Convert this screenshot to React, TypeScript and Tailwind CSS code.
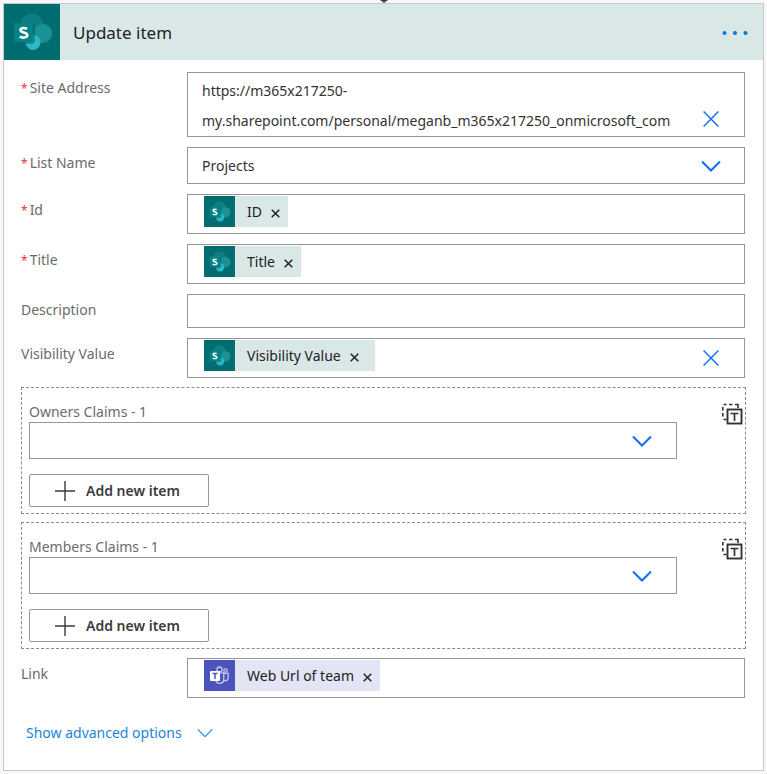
import type { ReactNode } from "react";

function SharePointIcon({ className }: { className: string }) {
  return (
    <svg viewBox="0 0 56 56" className={className} aria-hidden="true">
      <rect width="56" height="56" fill="#036c70" />
      <circle cx="28" cy="21" r="11.500" fill="#0b7f84" />
      <circle cx="38.500" cy="29.500" r="9.500" fill="#1b9197" />
      <circle cx="29" cy="38.500" r="7.500" fill="#2cb8c4" />
      <path d="M12 20h17a2 2 0 0 1 2 2v14.500a4 4 0 0 1-4 3.500H21.600A8 8 0 0 1 21.500 38H12z" fill="#025c60" opacity=".5" />
      <rect x="10" y="19" width="19" height="19" rx="1.500" fill="#048387" />
      <path
        d="M23 24.800c-1-.5-2.200-.8-3.500-.8-1.900 0-3 .8-3 2.100 0 3 6.800 1.800 6.800 5 0 1.600-1.600 2.500-3.900 2.500-1.500 0-2.700-.3-3.700-.9"
        fill="none"
        stroke="#fff"
        strokeWidth="2.600"
      />
    </svg>
  );
}

function TeamsIcon({ className }: { className: string }) {
  return (
    <svg viewBox="0 0 31 31" className={className} aria-hidden="true">
      <rect width="31" height="31" fill="#4b53bc" />
      <g fill="none" stroke="#c5c8ee" strokeWidth="1.300">
        <circle cx="15.500" cy="9.500" r="2.500" />
        <circle cx="21.500" cy="10.500" r="1.700" />
        <path d="M15 12.800h4.800v6.400a4.200 4.200 0 0 1-8.200 1.200" />
        <path d="M19.800 13.300h4.400v4.500a3 3 0 0 1-4.400 2.600" />
      </g>
      <rect x="6" y="11" width="10" height="10" rx="1" fill="#fff" />
      <path d="M8.500 13.500h5M11 13.500v5.500" stroke="#4b53bc" strokeWidth="1.500" />
    </svg>
  );
}

function Chevron({ className }: { className: string }) {
  return (
    <svg viewBox="0 0 20 12" className={className} fill="none" stroke="currentColor" aria-hidden="true">
      <path d="M1 1.500l9 9 9-9" />
    </svg>
  );
}

function Clear({ label }: { label: string }) {
  return (
    <button type="button" aria-label={label} className="mr-[25px] shrink-0 text-[#0f6cf5]">
      <svg viewBox="0 0 16 16" className="size-4" fill="none" stroke="currentColor" strokeWidth="1.400" aria-hidden="true">
        <path d="M.6.6l14.800 14.800M15.400.6L.6 15.400" />
      </svg>
    </button>
  );
}

function ArrayModeIcon() {
  return (
    <svg viewBox="0 0 22 22" className="size-[22px]" fill="none" stroke="#333" aria-hidden="true">
      <path d="M2.500 1.500H5.500M8 1.500h3.500M14 1.500h3V5M1.800 4v3.500M1.800 10v3.500M2.500 16.500h3" strokeWidth="1.600" />
      <rect x="6.500" y="6.500" width="14" height="14" strokeWidth="1.900" fill="#fff" />
      <path d="M9.500 10.500h8M13.500 10.500v7.500" strokeWidth="1.700" />
    </svg>
  );
}

function Row({ id, label, required, children }: { id: string; label: string; required?: boolean; children: ReactNode }) {
  return (
    <div className="flex items-start">
      <label htmlFor={id} className="w-[166px] shrink-0 pt-[6px] leading-5 text-[#6b6b6b]">
        {required && <span className="mr-[2px] text-xs text-[#f0323c]">*</span>}
        {label}
      </label>
      <div className="min-w-0 flex-1">{children}</div>
    </div>
  );
}

function TokenField({ id, token, teams, clearable }: { id: string; token: string; teams?: boolean; clearable?: boolean }) {
  return (
    <div className="flex h-10 items-center border border-[#979797]">
      <span
        className={`mb-1.5 ml-4 flex h-[31px] shrink-0 items-center ${clearable ? "pr-4" : "pr-2"} ${teams ? "bg-[#e3e4f4]" : "bg-[#d9e8e7]"}`}
      >
        {teams ? <TeamsIcon className="size-[31px]" /> : <SharePointIcon className="size-[31px]" />}
        <span className="ml-3 pt-px text-[#222]">{token}</span>
        <button type="button" aria-label={`Remove ${token}`} className="ml-[9px] pt-1 text-[#222]">
          <svg viewBox="0 0 9 9" className="size-[9px]" stroke="currentColor" strokeWidth="1.500" aria-hidden="true">
            <path d="M.7.7l7.600 7.600M8.300.7L.7 8.300" />
          </svg>
        </button>
      </span>
      <input id={id} className="min-w-0 flex-1 self-stretch px-2 outline-none" />
      {clearable && (
        <div className="pt-1">
          <Clear label={`Clear ${token}`} />
        </div>
      )}
    </div>
  );
}

function Claims({ id, label }: { id: string; label: string }) {
  return (
    <div className="flex h-[127px] items-start justify-between border border-dashed border-[#8a8a8a] pl-[7px]">
      <div className="w-[648px] pt-[14px]">
        <label htmlFor={id} className="block leading-5 text-[#6b6b6b]">
          {label}
        </label>
        <div className="grid items-center">
          <select id={id} className="col-start-1 row-start-1 h-[37px] w-full appearance-none border border-[#979797] bg-white px-3">
            <option value=""></option>
          </select>
          <Chevron className="pointer-events-none col-start-1 row-start-1 mr-[25px] h-3 w-5 justify-self-end stroke-2 text-[#0f6cf5]" />
        </div>
        <button
          type="button"
          className="mt-[15px] flex h-[33px] w-[180px] items-center gap-[11px] rounded-[2px] border border-[#979797] pl-[25px] font-semibold text-[#3b3b3b]"
        >
          <svg viewBox="0 0 20 20" className="size-5" stroke="currentColor" strokeWidth="1.400" aria-hidden="true">
            <path d="M10 0v20M0 10h20" />
          </svg>
          Add new item
        </button>
      </div>
      <button type="button" aria-label="Switch to input entire array" className="mt-[15px] mr-[2px]">
        <ArrayModeIcon />
      </button>
    </div>
  );
}

export default function App() {
  return (
    <main className="min-h-screen bg-[#f7f7f7] px-[3px] pb-[3px] font-['Noto_Sans','Open_Sans',sans-serif] text-sm">
      <svg viewBox="0 0 10 3" className="mx-auto block h-[3px] w-[10px]" aria-hidden="true">
        <path d="M1 0h8L5 3z" fill="#444" />
      </svg>
      <section className="border border-[#c8c8c8] bg-white">
        <header className="flex h-14 items-center bg-[#d9e8e7]">
          <SharePointIcon className="size-14" />
          <h1 className="ml-[13px] flex-1 pt-[2px] text-[17px] text-[#222]">Update item</h1>
          <button type="button" aria-label="More options" className="mt-[2px] mr-[15px]">
            <svg viewBox="0 0 26 6" className="h-[6px] w-[26px]" fill="#0078d4" aria-hidden="true">
              <circle cx="2.500" cy="3" r="2" />
              <circle cx="13" cy="3" r="2" />
              <circle cx="23.500" cy="3" r="2" />
            </svg>
          </button>
        </header>

        <form className="pr-[17px] pl-[17px] pt-3">
          <div className="flex flex-col gap-[10px] pr-px">
            <Row id="site" label="Site Address" required>
              <div className="flex h-[65px] items-end border border-[#979797]">
                <textarea
                  id="site"
                  rows={2}
                  className="block h-full min-w-0 flex-1 resize-none overflow-hidden pt-[3px] pl-[14px] leading-[30px] text-[#333] outline-none"
                  defaultValue={"https://m365x217250-\nmy.sharepoint.com/personal/meganb_m365x217250_onmicrosoft_com"}
                />
                <div className="pb-1">
                  <Clear label="Clear site address" />
                </div>
              </div>
            </Row>
            <Row id="list" label="List Name" required>
              <div className="grid items-center">
                <select
                  id="list"
                  className="col-start-1 row-start-1 h-[37px] w-full appearance-none border border-[#979797] bg-white px-[14px] text-[#333]"
                >
                  <option>Projects</option>
                </select>
                <Chevron className="pointer-events-none col-start-1 row-start-1 mr-6 h-3 w-5 justify-self-end stroke-2 text-[#0f6cf5]" />
              </div>
            </Row>
            <Row id="item-id" label="Id" required>
              <TokenField id="item-id" token="ID" />
            </Row>
            <Row id="title" label="Title" required>
              <TokenField id="title" token="Title" />
            </Row>
            <Row id="description" label="Description">
              <input id="description" className="block h-[34px] w-full border border-[#979797] px-[14px] outline-none" />
            </Row>
            <Row id="visibility" label="Visibility Value">
              <TokenField id="visibility" token="Visibility Value" clearable />
            </Row>
          </div>
          <div className="my-[9px] flex flex-col gap-2">
            <Claims id="owners" label="Owners Claims - 1" />
            <Claims id="members" label="Members Claims - 1" />
          </div>
          <div className="pr-px">
            <Row id="link" label="Link">
              <TokenField id="link" token="Web Url of team" teams />
            </Row>
          </div>
          <button type="button" className="mt-[25px] mb-[27px] ml-[5px] flex items-center gap-[15px] leading-5 text-[#1c84d8]">
            Show advanced options
            <Chevron className="h-[10px] w-4 stroke-[1.5] text-[#2b88e6]" />
          </button>
        </form>
      </section>
    </main>
  );
}
